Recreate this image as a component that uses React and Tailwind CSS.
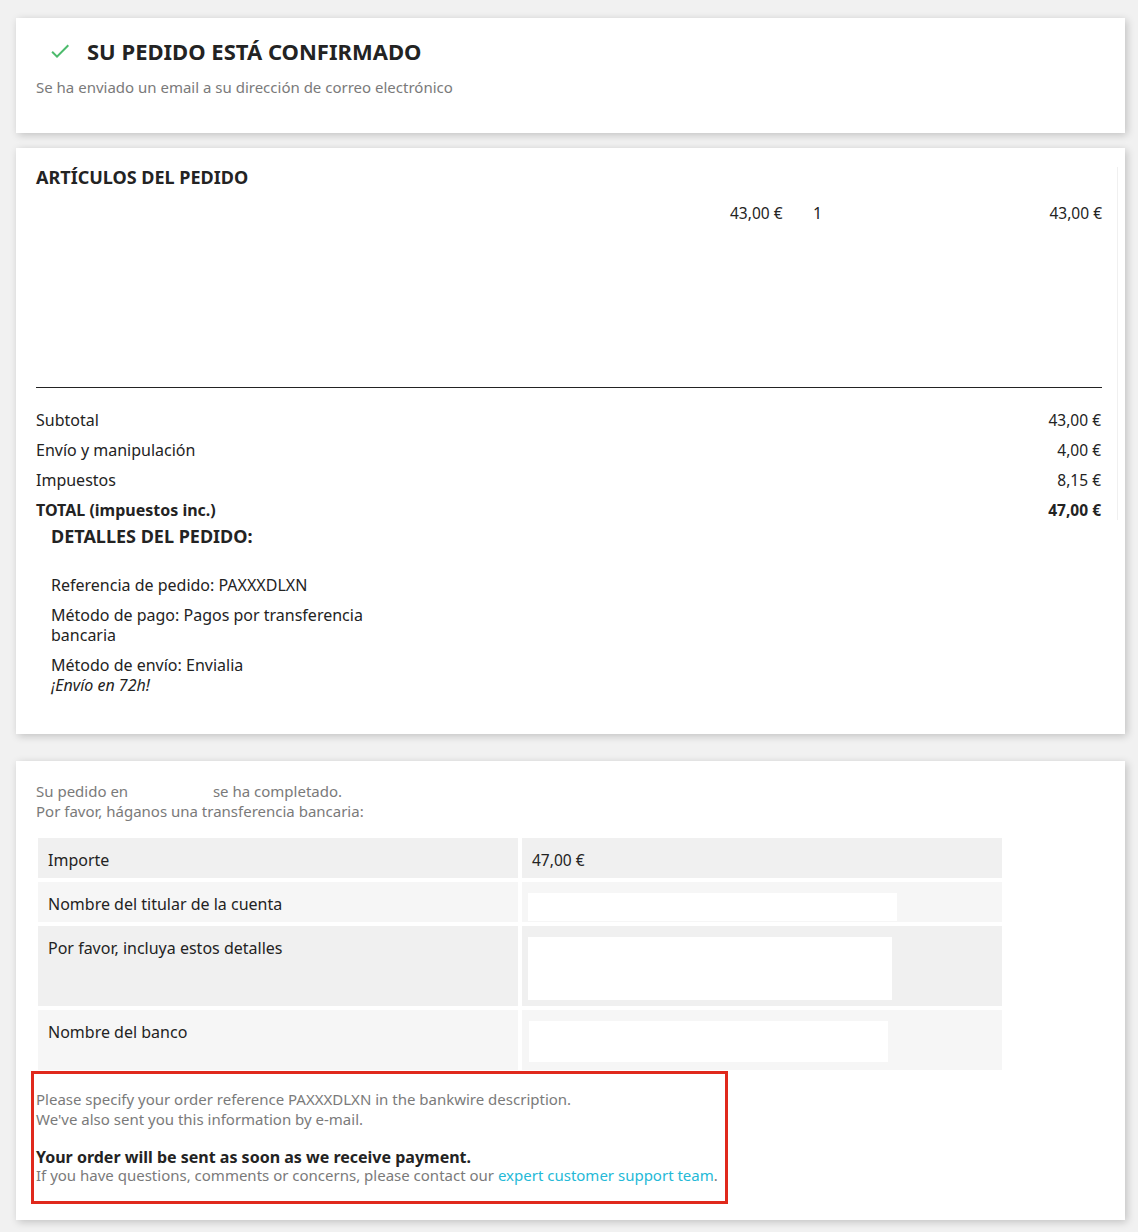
import React from "react";

const font = { fontFamily: "'Noto Sans', 'DejaVu Sans', sans-serif" };

function Check() {
  return (
    <svg width="24" height="24" viewBox="0 0 24 24" className="shrink-0">
      <path d="M9 16.17L4.83 12l-1.42 1.41L9 19 21 7l-1.41-1.41z" fill="#4cbb6c" />
    </svg>
  );
}

function Card({ className = "", children }) {
  return (
    <div className={"bg-white shadow-[2px_2px_8px_0_rgba(0,0,0,0.2)] " + className}>{children}</div>
  );
}

export default function App() {
  return (
    <div className="min-h-[1232px] bg-[#f1f1f1] pt-[18px] pl-[16px] pr-[13px] pb-[12px] text-[#232323]" style={font}>
      {/* Card 1 */}
      <Card className="h-[115px] pt-[21px] px-[20px]">
        <div className="flex items-center gap-[15px] pl-[12px] h-[24px]">
          <Check />
          <h3 className="text-[22px] leading-[24px] font-bold uppercase text-[#232323]">Su pedido está confirmado</h3>
        </div>
        <p className="mt-[14px] text-[15px] leading-[20px] text-[#7a7a7a]">
          Se ha enviado un email a su dirección de correo electrónico
        </p>
      </Card>

      {/* Card 2 */}
      <Card className="mt-[15px] h-[586px] pt-[19px] pl-[20px] pr-[7px]">
        <div className="border-r border-[#f0f0f0] pr-[15px]">
          <h3 className="text-[18px] leading-[20px] font-bold uppercase">Artículos del pedido</h3>
          <div className="mt-[16px] h-[185px] border-b border-[#232323]">
            <div className="grid grid-cols-[694px_83px_1fr] text-[15.5px] leading-[20px]">
              <div></div>
              <div>43,00&nbsp;€</div>
              <div className="flex justify-between">
                <span className="text-[16px]">1</span>
                <span>43,00&nbsp;€</span>
              </div>
            </div>
          </div>
          <div className="mt-[22px] flex flex-col gap-[10px] text-[16px] leading-[20px]">
            <div className="flex justify-between pr-[1px]"><span>Subtotal</span><span className="text-[15.5px]">43,00&nbsp;€</span></div>
            <div className="flex justify-between pr-[1px]"><span>Envío y manipulación</span><span className="text-[15.5px]">4,00&nbsp;€</span></div>
            <div className="flex justify-between pr-[1px]"><span>Impuestos</span><span className="text-[15.5px]">8,15&nbsp;€</span></div>
            <div className="flex justify-between pr-[1px] font-bold"><span>TOTAL (impuestos inc.)</span><span className="text-[15.5px]">47,00&nbsp;€</span></div>
          </div>
        </div>
        <div className="ml-[15px] mt-[6px] w-[330px]">
          <h3 className="text-[18px] leading-[20px] font-bold uppercase">Detalles del pedido:</h3>
          <ul className="mt-[29px] flex flex-col gap-[10px] text-[16px] leading-[20px]">
            <li>Referencia de pedido: PAXXXDLXN</li>
            <li>Método de pago: Pagos por transferencia bancaria</li>
            <li>
              Método de envío: Envialia
              <br />
              <em>¡Envío en 72h!</em>
            </li>
          </ul>
        </div>
      </Card>

      {/* Card 3 */}
      <Card className="mt-[27px] pt-[20px] px-[20px] pb-[16px]">
        <p className="text-[15px] leading-[20px] text-[#7a7a7a]">
          Su pedido en <span className="inline-block w-[77px]"></span> se ha completado.
          <br />
          Por favor, háganos una transferencia bancaria:
        </p>
        <div className="mt-[17px] ml-[2px] w-[964px] grid grid-cols-2 gap-[4px] text-[16px] leading-[20px]">
          <div className="h-[40px] bg-[#f0f0f0] pl-[10px] pt-[12px]">Importe</div>
          <div className="h-[40px] bg-[#f0f0f0] pl-[10px] pt-[12px] text-[15.5px]">47,00&nbsp;€</div>

          <div className="h-[40px] bg-[#f6f6f6] pl-[10px] pt-[12px]">Nombre del titular de la cuenta</div>
          <div className="h-[40px] bg-[#f6f6f6] pl-[6px] pt-[11px]">
            <div className="h-[28px] w-[369px] bg-white"></div>
          </div>

          <div className="h-[80px] bg-[#f0f0f0] pl-[10px] pt-[12px]">Por favor, incluya estos detalles</div>
          <div className="h-[80px] bg-[#f0f0f0] pl-[6px] pt-[11px]">
            <div className="h-[63px] w-[364px] bg-white"></div>
          </div>

          <div className="h-[60px] bg-[#f6f6f6] pl-[10px] pt-[12px]">Nombre del banco</div>
          <div className="h-[60px] bg-[#f6f6f6] pl-[7px] pt-[11px]">
            <div className="h-[41px] w-[359px] bg-white"></div>
          </div>
        </div>

        <div className="mt-[1px] ml-[-5px] w-[697px] border-[3px] border-[#e0291c] pl-[2px] pt-[15px] pb-[17px] text-[15px] text-[#7a7a7a]">
          <p className="leading-[20px]">
            Please specify your order reference PAXXXDLXN in the bankwire description.
            <br />
            We've also sent you this information by e-mail.
          </p>
          <p className="mt-[19px] leading-[18px] text-[16px] font-bold text-[#232323]">
            Your order will be sent as soon as we receive payment.
          </p>
          <p className="leading-[18px]">
            If you have questions, comments or concerns, please contact our{" "}
            <a className="text-[#24b9d7]">expert customer support team</a>.
          </p>
        </div>
      </Card>
    </div>
  );
}
